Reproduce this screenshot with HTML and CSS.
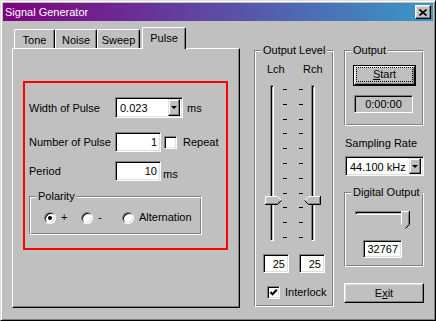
FILE: index.html
```html
<!DOCTYPE html>
<html lang="en">
<head>
  <meta charset="UTF-8">
  <title>Signal Generator</title>
  <link rel="stylesheet" href="styles.css">
</head>
<body>
  <div class="window">
    <div class="titlebar">
      <span class="title">Signal Generator</span>
      <div class="close-btn">
        <svg width="8" height="7" viewBox="0 0 8 7"><path d="M0.5 0.5 L7.5 6.5 M7.5 0.5 L0.5 6.5" stroke="#000" stroke-width="1.6" fill="none"/></svg>
      </div>
    </div>

    <div class="client">
      <!-- tab control -->
      <div class="tabctrl">
        <div class="tabs">
          <div class="tab tab-tone">Tone</div>
          <div class="tab tab-noise">Noise</div>
          <div class="tab tab-sweep">Sweep</div>
          <div class="tab tab-pulse active">Pulse</div>
        </div>
        <div class="tab-panel">
          <div class="highlight">
            <div class="row row-width">
              <span class="lbl">Width of Pulse</span>
              <div class="combo combo-width">
                <span class="combo-text">0.023</span>
                <div class="combo-btn"><span class="arrow"></span></div>
              </div>
              <span class="unit unit-width">ms</span>
            </div>
            <div class="row row-count">
              <span class="lbl">Number of Pulse</span>
              <div class="field field-pulse">1</div>
              <div class="check check-repeat"></div>
              <span class="check-label">Repeat</span>
            </div>
            <div class="row row-period">
              <span class="lbl">Period</span>
              <div class="field field-pulse">10</div>
              <span class="unit unit-period">ms</span>
            </div>
            <div class="group polarity">
              <span class="group-title">Polarity</span>
              <div class="radios">
                <div class="opt opt-plus"><span class="radio checked"></span><span class="opt-text">+</span></div>
                <div class="opt opt-minus"><span class="radio"></span><span class="opt-text">-</span></div>
                <div class="opt"><span class="radio"></span><span class="opt-text">Alternation</span></div>
              </div>
            </div>
          </div>
        </div>
      </div>

      <!-- output level -->
      <div class="group level-group">
        <span class="group-title">Output Level</span>
        <div class="chan-labels"><span class="chan-l">Lch</span><span>Rch</span></div>
        <div class="sliders">
          <div class="vslider">
            <div class="vtrack vtrack-l"></div>
            <svg class="vthumb" width="17" height="9" viewBox="0 0 17 9">
              <polygon points="0,0 12,0 16,4 12,8 0,8" fill="#c0c0c0"/>
              <polyline points="0.5,8 0.5,0.5 12.5,0.5 16,4" fill="none" stroke="#fff"/>
              <polyline points="0,8.5 12.5,8.5 16.5,4.5" fill="none" stroke="#000"/>
              <polyline points="1,7.5 12,7.5 15,4.5" fill="none" stroke="#808080"/>
            </svg>
          </div>
          <div class="ticks ticks-l">
            <i></i><i></i><i></i><i></i><i></i><i></i><i></i><i></i><i></i><i></i><i></i>
          </div>
          <div class="ticks ticks-r">
            <i></i><i></i><i></i><i></i><i></i><i></i><i></i><i></i><i></i><i></i><i></i>
          </div>
          <div class="vslider vslider-r">
            <div class="vtrack vtrack-r"></div>
            <svg class="vthumb" width="17" height="9" viewBox="0 0 17 9">
              <polygon points="4,0 16,0 16,8 4,8 0,4" fill="#c0c0c0"/>
              <polyline points="0.5,4.5 4.5,0.5 16,0.5" fill="none" stroke="#fff"/>
              <polyline points="16.5,0 16.5,8.5 4.5,8.5 0.5,4.5" fill="none" stroke="#000"/>
              <polyline points="15.5,1 15.5,7.5 4.5,7.5" fill="none" stroke="#808080"/>
            </svg>
          </div>
        </div>
        <div class="edits">
          <div class="field field-level">25</div>
          <div class="field field-level">25</div>
        </div>
        <div class="interlock">
          <div class="check">
            <svg width="9" height="9" viewBox="0 0 9 9"><polyline points="1.5,4 3.5,6.2 7.8,1.8" fill="none" stroke="#000" stroke-width="2"/></svg>
          </div>
          <span class="check-label">Interlock</span>
        </div>
      </div>

      <!-- right column -->
      <div class="right-col">
        <div class="group out-group">
          <span class="group-title">Output</span>
          <div class="btn-default">
            <div class="btn btn-start"><span class="focus"><u>S</u>tart</span></div>
          </div>
          <div class="time-display">0:00:00</div>
        </div>
        <div class="rate-label">Sampling Rate</div>
        <div class="combo combo-rate">
          <span class="combo-text">44.100 kHz</span>
          <div class="combo-btn"><span class="arrow"></span></div>
        </div>
        <div class="group dig-group">
          <span class="group-title">Digital Output</span>
          <div class="hslider">
            <div class="htrack"></div>
            <svg class="hthumb" width="9" height="18" viewBox="0 0 9 18">
              <polygon points="0,0 8,0 8,13 4,17 0,13" fill="#c0c0c0"/>
              <polyline points="0.5,13.5 0.5,0.5 8,0.5" fill="none" stroke="#fff"/>
              <polyline points="8.5,0 8.5,13.5 4.5,17.5" fill="none" stroke="#000"/>
              <polyline points="7.5,1 7.5,13 4.5,16" fill="none" stroke="#808080"/>
            </svg>
          </div>
          <div class="field field-dig">32767</div>
        </div>
        <div class="btn btn-exit">E<u>x</u>it</div>
      </div>
    </div>
  </div>
</body>
</html>
```

FILE: styles.css
```css
body {
  margin: 0;
  background-color: #c0c0c0;
  font-family: "Liberation Sans", Arial, sans-serif;
  font-size: 11px;
  line-height: 13px;
  color: #000;
}
.window {
  width: 436px;
  height: 321px;
  box-sizing: border-box;
  border: 1px solid;
  border-color: #dfdfdf #000 #000 #dfdfdf;
  box-shadow: inset 1px 1px 0 #fff, inset -1px -1px 0 #808080;
  padding: 2px;
  background-color: #c0c0c0;
}
.titlebar {
  height: 18px;
  display: flex;
  align-items: center;
  justify-content: space-between;
  padding: 0 2px;
  background: linear-gradient(to right, #800080, #3898c8);
  color: #fff;
}
.title {
  padding-top: 1px;
}
.close-btn {
  width: 16px;
  height: 14px;
  box-sizing: border-box;
  background-color: #c0c0c0;
  border: 1px solid;
  border-color: #fff #000 #000 #fff;
  box-shadow: inset -1px -1px 0 #808080, inset 1px 1px 0 #dfdfdf;
  display: flex;
  align-items: center;
  justify-content: center;
}
.client {
  display: flex;
  align-items: flex-start;
  padding: 6px 0 0 9px;
}

/* tabs */
.tabctrl {
  width: 228px;
  flex: none;
}
.tabs {
  display: flex;
  align-items: flex-end;
  height: 21px;
  padding-left: 2px;
}
.tab {
  box-sizing: border-box;
  height: 19px;
  border: 1px solid;
  border-color: #fff #000 transparent #fff;
  border-bottom: none;
  border-radius: 2px 2px 0 0;
  box-shadow: inset -1px 0 0 #808080;
  text-align: center;
  padding-top: 4px;
}
.tab-tone { width: 41px; }
.tab-noise { width: 42px; }
.tab-sweep { width: 43px; }
.tab.active {
  width: 44px;
  height: 22px;
  margin-left: 2px;
  margin-bottom: -1px;
  position: relative;
  z-index: 1;
  background-color: #c0c0c0;
}
.tab-panel {
  height: 260px;
  box-sizing: border-box;
  border: 1px solid;
  border-color: #fff #000 #000 #fff;
  box-shadow: inset -1px -1px 0 #808080;
  padding: 32px 0 0 10px;
}
.highlight {
  width: 205px;
  height: 169px;
  box-sizing: border-box;
  border: 2px solid #f00;
  padding: 14px 0 0 4px;
}
.row {
  display: flex;
}
.lbl {
  width: 86px;
  flex: none;
}
.row-width {
  align-items: baseline;
}
.row-count {
  margin-top: 14px;
  align-items: center;
}
.row-period {
  margin-top: 9px;
  align-items: center;
}
.unit-width { margin-left: 4px; }
.unit-period {
  margin-left: 2px;
  align-self: flex-end;
}

/* controls */
.field {
  box-sizing: border-box;
  background-color: #fff;
  border: 1px solid;
  border-color: #808080 #fff #fff #808080;
  box-shadow: inset 1px 1px 0 #000, inset -1px -1px 0 #dfdfdf;
  display: flex;
  align-items: center;
  justify-content: flex-end;
  padding: 1px 3px 0 0;
}
.field-pulse {
  width: 46px;
  height: 20px;
}
.field-level {
  width: 26px;
  height: 19px;
}
.field-dig {
  width: 39px;
  height: 18px;
  margin: 11px 0 0 18px;
}
.combo {
  box-sizing: border-box;
  background-color: #fff;
  border: 1px solid;
  border-color: #808080 #fff #fff #808080;
  box-shadow: inset 1px 1px 0 #000, inset -1px -1px 0 #dfdfdf;
  display: flex;
  align-items: center;
  padding: 1px;
}
.combo-text {
  flex: 1;
  padding: 2px 0 0 3px;
}
.combo-btn {
  width: 12px;
  height: 17px;
  box-sizing: border-box;
  background-color: #c0c0c0;
  border: 1px solid;
  border-color: #dfdfdf #000 #000 #dfdfdf;
  box-shadow: inset -1px -1px 0 #808080, inset 1px 1px 0 #fff;
  display: flex;
  align-items: center;
  justify-content: center;
  margin-right: 1px;
}
.arrow {
  width: 0;
  height: 0;
  border-left: 3px solid transparent;
  border-right: 3px solid transparent;
  border-top: 3px solid #000;
}
.combo-width {
  width: 68px;
  height: 21px;
}
.combo-rate {
  width: 79px;
  height: 20px;
  margin: 6px 0 0 1px;
}
.combo-rate .combo-btn {
  height: 16px;
}
.check {
  width: 13px;
  height: 13px;
  flex: none;
  box-sizing: border-box;
  background-color: #fff;
  border: 1px solid;
  border-color: #808080 #fff #fff #808080;
  box-shadow: inset 1px 1px 0 #000, inset -1px -1px 0 #dfdfdf;
  display: flex;
  align-items: center;
  justify-content: center;
}
.check-repeat { margin-left: 3px; }
.check-label { margin-left: 6px; }
.btn {
  box-sizing: border-box;
  background-color: #c0c0c0;
  border: 1px solid;
  border-color: #fff #000 #000 #fff;
  box-shadow: inset -1px -1px 0 #808080, inset 1px 1px 0 #dfdfdf;
  display: flex;
  align-items: center;
  justify-content: center;
}
.btn-default {
  width: 63px;
  height: 21px;
  box-sizing: border-box;
  border: 1px solid #000;
  display: flex;
  margin: 14px 0 0 8px;
}
.btn-start {
  flex: 1;
  align-items: stretch;
}
.focus {
  flex: 1;
  margin: 0 1px 2px 1px;
  border: 1px dotted #000;
  display: flex;
  align-items: center;
  justify-content: center;
}
.btn-exit {
  width: 80px;
  height: 20px;
  margin-top: 16px;
}

/* group boxes */
.group {
  position: relative;
  box-sizing: border-box;
  border: 1px solid;
  border-color: #808080 #fff #fff #808080;
  box-shadow: inset 1px 1px 0 #fff, inset -1px -1px 0 #808080;
}
.group-title {
  position: absolute;
  top: -7px;
  left: 6px;
  padding: 0 2px;
  background-color: #c0c0c0;
}
.polarity {
  width: 173px;
  height: 39px;
  margin-top: 15px;
}
.radios {
  display: flex;
  align-items: center;
  margin-top: 14px;
  padding-left: 14px;
}
.opt {
  display: flex;
  align-items: center;
}
.opt-plus { width: 37px; }
.opt-minus { width: 41px; }
.opt-text { margin-left: 5px; }
.radio {
  width: 12px;
  height: 12px;
  box-sizing: border-box;
  border-radius: 50%;
  background-color: #fff;
  border: 1px solid;
  border-color: #808080 #fff #fff #808080;
  box-shadow: inset 1px 1px 0 #000, inset -1px -1px 0 #dfdfdf;
  display: flex;
  align-items: center;
  justify-content: center;
}
.radio.checked::after {
  content: "";
  width: 4px;
  height: 4px;
  border-radius: 50%;
  background-color: #000;
}

/* output level */
.level-group {
  width: 80px;
  height: 257px;
  flex: none;
  margin: 23px 0 0 14px;
}
.chan-labels {
  display: flex;
  margin: 12px 0 0 12px;
}
.chan-l { width: 36px; }
.sliders {
  display: flex;
  height: 156px;
  margin: 9px 0 0 10px;
}
.vslider {
  position: relative;
  width: 17px;
  height: 156px;
}
.vslider-r { margin-left: 1px; }
.vtrack {
  width: 4px;
  height: 156px;
  box-sizing: border-box;
  border: 1px solid;
  border-color: #808080 #fff #fff #808080;
  box-shadow: inset 1px 1px 0 #000;
}
.vtrack-l { margin-left: 5px; }
.vtrack-r { margin-left: 7px; }
.vthumb {
  position: absolute;
  top: 111px;
  left: 0;
}
.ticks {
  width: 4px;
  height: 149px;
  padding-top: 4px;
  display: flex;
  flex-direction: column;
  justify-content: space-between;
}
.ticks i {
  display: block;
  height: 1px;
  background-color: #000;
}
.ticks-l { margin-left: 1px; }
.ticks-r { margin-left: 12px; }
.edits {
  display: flex;
  gap: 10px;
  margin: 13px 0 0 8px;
}
.interlock {
  display: flex;
  align-items: center;
  margin: 13px 0 0 12px;
}
.interlock .check-label { margin-left: 5px; }

/* right column */
.right-col {
  width: 80px;
  flex: none;
  margin: 23px 0 0 10px;
}
.out-group { height: 76px; }
.time-display {
  width: 59px;
  height: 18px;
  box-sizing: border-box;
  margin: 9px 0 0 9px;
  border: 1px solid;
  border-color: #808080 #fff #fff #808080;
  box-shadow: inset 1px 1px 0 #000;
  display: flex;
  align-items: center;
  justify-content: center;
}
.rate-label {
  margin-top: 11px;
  padding-left: 1px;
}
.dig-group {
  height: 75px;
  margin-top: 16px;
}
.hslider {
  position: relative;
  width: 54px;
  height: 18px;
  margin: 18px 0 0 10px;
}
.htrack {
  width: 52px;
  height: 4px;
  margin-top: 6px;
  box-sizing: border-box;
  border: 1px solid;
  border-color: #808080 #fff #fff #808080;
  box-shadow: inset 1px 1px 0 #000;
}
.hthumb {
  position: absolute;
  top: 0;
  left: 46px;
}
```
